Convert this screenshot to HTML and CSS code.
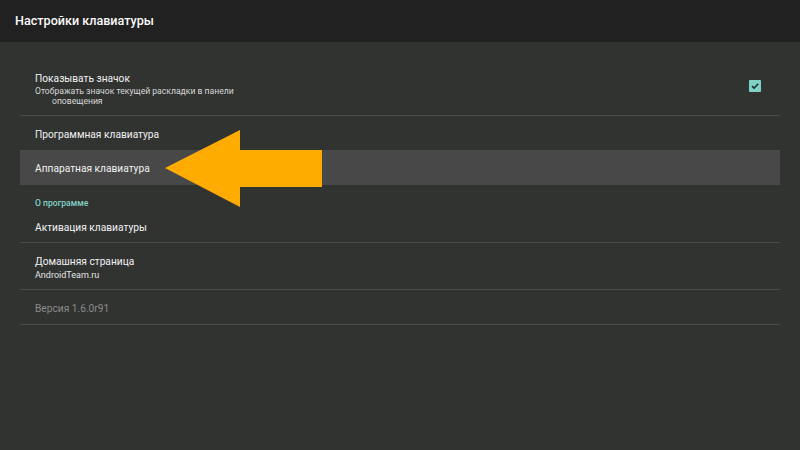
FILE: index.html
```html
<!DOCTYPE html>
<html>
<head>
  <meta charset="UTF-8">
  <title>Настройки клавиатуры</title>
  <link rel="stylesheet" href="styles.css">
</head>
<body>
  <!-- Top bar -->
  <div class="topbar">Настройки клавиатуры</div>

  <div class="prefs">
    <div class="pref pref-two">
      <div class="pref-text">
        <div class="pref-title">Показывать значок</div>
        <div class="pref-summary">Отображать значок текущей раскладки в панели<br><span class="wrap">оповещения</span></div>
      </div>
      <span class="checkbox">
        <svg width="12" height="12" viewBox="0 0 12 12"><path d="M3 6.2 L5.1 8.2 L9.2 3.8" fill="none" stroke="#1f2b29" stroke-width="1.6"/></svg>
      </span>
    </div>
    <div class="pref pref-one no-line">Программная клавиатура</div>
    <div class="pref pref-one selected no-line">Аппаратная клавиатура</div>

    <div class="category">О программе</div>
    <div class="pref pref-act">Активация клавиатуры</div>
    <div class="pref pref-home">
      <div class="pref-text">
        <div class="pref-title">Домашняя страница</div>
        <div class="pref-summary light">AndroidTeam.ru</div>
      </div>
    </div>
    <div class="pref pref-one disabled">Версия 1.6.0r91</div>
  </div>

  <!-- Pointer arrow over the list -->
  <svg class="arrow" width="800" height="450" viewBox="0 0 800 450">
    <polygon points="165,168 240,130 240,150 322,150 322,187 240,187 240,207" fill="#ffab00"/>
  </svg>
</body>
</html>
```

FILE: styles.css
```css
* { box-sizing: border-box; }
html, body {
  margin: 0;
  height: 100%;
}
body {
  width: 800px;
  height: 450px;
  overflow: hidden;
  background-color: #313331;
  font-family: Roboto, "Noto Sans", sans-serif;
  color: #f2f2f2;
  position: relative;
}
.topbar {
  height: 42px;
  background-color: #212121;
  padding-left: 15px;
  font-size: 12.6px;
  font-weight: 500;
  line-height: 41px;
  color: #fafafa;
}
.prefs {
  margin: 20px 20px 0 20px;
}
.pref {
  border-bottom: 1px solid #4a4b4a;
  padding: 0 19px 0 15px;
  font-size: 10.2px;
}
.pref.no-line { border-bottom: none; }
.pref-two {
  display: flex;
  align-items: center;
  justify-content: space-between;
  padding-top: 10px;
  padding-bottom: 9px;
  height: 54px;
}
.pref-title {
  line-height: 14px;
}
.pref-summary {
  font-size: 8.6px;
  line-height: 10px;
  color: #d6d6d6;
}
.pref-summary .wrap {
  display: inline-block;
  margin-left: 17px;
}
.pref-summary.light {
  font-size: 9px;
  line-height: 12px;
  color: #e6e6e6;
}
.checkbox {
  width: 12px;
  height: 12px;
  background-color: #80d2c6;
  border-radius: 1px;
  display: flex;
  margin-top: -6px;
}
.pref-one {
  height: 34px;
  line-height: 34px;
  padding-top: 2px;
}
.pref-one.selected {
  height: 35px;
  line-height: 35px;
  padding-top: 1px;
  background-color: #474847;
}
.pref-one.disabled {
  color: #8a8b8a;
  height: 35px;
  line-height: 34px;
  padding-top: 2px;
}
.category {
  height: 26px;
  padding: 11px 0 0 15px;
  font-size: 8.6px;
  line-height: 14px;
  font-weight: 500;
  color: #80d2c6;
}
.pref-act {
  height: 32px;
  line-height: 31px;
  padding-top: 1px;
}
.pref-home {
  height: 47px;
  padding-top: 12px;
}
.arrow {
  position: absolute;
  left: 0;
  top: 0;
  pointer-events: none;
}
```
